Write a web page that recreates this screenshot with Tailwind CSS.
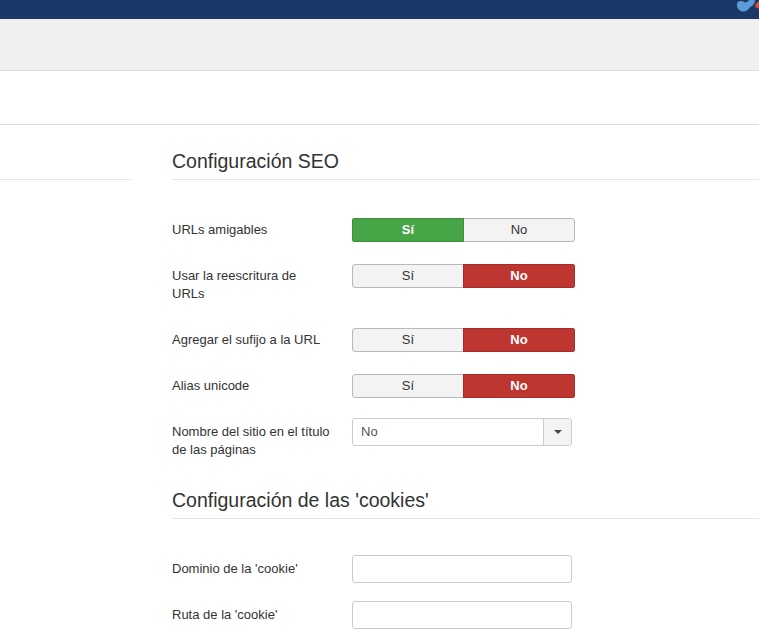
<!doctype html>
<html>
  <head>
    <meta charset="utf-8">
    <title>Configuración SEO</title>
    <script src="https://cdn.jsdelivr.net/npm/@tailwindcss/browser@4"></script>
  </head>
  <body class="h-[632px] w-[759px] overflow-hidden bg-white font-['Liberation_Sans',Arial,sans-serif] text-[13px] text-[#333]">
    <!-- top bar -->
    <header class="flex h-[19px] justify-end overflow-hidden bg-[#1a3867]">
      <svg class="h-[19px] w-[24px]" viewBox="0 0 24 19">
        <path d="M2.500 2.500 C5 0 8 1 10 2.500 C12 2.500 13 1.500 14 0 L20 0 C20 3 18 6 15 7 C14 9 12 11.500 8 11.500 C4 11.500 0.500 7 2.500 2.500 Z" fill="#5a9bd8"/>
        <path d="M20 5.500 C20.500 3.500 22.500 2 24 1.500 L24 8.500 C22 8.500 20 7.500 20 5.500 Z" fill="#e2482f"/>
      </svg>
    </header>
    <!-- toolbar -->
    <div class="h-[52px] border-b border-[#ddd] bg-[#f0f0f0]"></div>
    <!-- subhead -->
    <div class="h-[54px] border-b border-[#ddd]"></div>

    <main class="flex">
      <aside class="w-[172px] shrink-0 pr-[41px]">
        <div class="h-[55px] border-b border-[#e5e5e5]"></div>
      </aside>

      <div class="min-w-0 flex-1">
        <h2 class="mt-[24px] h-[31px] border-b border-[#e5e5e5] text-[19.5px] leading-[24px] text-[#333]">Configuración SEO</h2>

        <div class="mt-[38px] flex flex-col">
          <div class="flex h-[24px] items-center">
            <label class="w-[180px] shrink-0 leading-[18px]">URLs amigables</label>
            <div class="flex h-[24px] w-[223px] overflow-hidden rounded-[3px] text-center leading-[22px]">
              <span class="w-[112px] border border-[#3d8b3d] bg-[#46a546] font-bold text-white">Sí</span>
              <span class="flex-1 rounded-r-[3px] border border-l-0 border-[#b8b8b8] bg-[#f3f3f3]">No</span>
            </div>
          </div>

          <div class="mt-[22px] flex h-[24px] items-start">
            <label class="w-[180px] shrink-0 pr-[30px] pt-[3px] leading-[18px]">Usar la reescritura de URLs</label>
            <div class="flex h-[24px] w-[223px] overflow-hidden rounded-[3px] text-center leading-[22px]">
              <span class="w-[111px] rounded-l-[3px] border border-r-0 border-[#b8b8b8] bg-[#f3f3f3]">Sí</span>
              <span class="flex-1 border border-[#a72c2c] bg-[#bd362f] font-bold text-white">No</span>
            </div>
          </div>

          <div class="mt-[40px] flex h-[24px] items-center">
            <label class="w-[180px] shrink-0 leading-[18px]">Agregar el sufijo a la URL</label>
            <div class="flex h-[24px] w-[223px] overflow-hidden rounded-[3px] text-center leading-[22px]">
              <span class="w-[111px] rounded-l-[3px] border border-r-0 border-[#b8b8b8] bg-[#f3f3f3]">Sí</span>
              <span class="flex-1 border border-[#a72c2c] bg-[#bd362f] font-bold text-white">No</span>
            </div>
          </div>

          <div class="mt-[22px] flex h-[24px] items-center">
            <label class="w-[180px] shrink-0 leading-[18px]">Alias unicode</label>
            <div class="flex h-[24px] w-[223px] overflow-hidden rounded-[3px] text-center leading-[22px]">
              <span class="w-[111px] rounded-l-[3px] border border-r-0 border-[#b8b8b8] bg-[#f3f3f3]">Sí</span>
              <span class="flex-1 border border-[#a72c2c] bg-[#bd362f] font-bold text-white">No</span>
            </div>
          </div>

          <div class="mt-[20px] flex items-start">
            <label class="w-[180px] shrink-0 pr-[10px] pt-[5px] leading-[18px]">Nombre del sitio en el título de las páginas</label>
            <div class="flex h-[28px] w-[220px] rounded-[3px] border border-[#ccc] bg-white">
              <span class="flex-1 pl-[8px] leading-[26px] text-[#555]">No</span>
              <span class="flex w-[28px] items-center justify-center rounded-r-[3px] border-l border-[#ccc] bg-[#f3f3f3]">
                <span class="h-0 w-0 border-x-[4px] border-t-[4px] border-x-transparent border-t-[#444]"></span>
              </span>
            </div>
          </div>
        </div>

        <h2 class="mt-[29px] h-[31px] border-b border-[#e5e5e5] text-[19.5px] leading-[24px] text-[#333]">Configuración de las 'cookies'</h2>

        <div class="mt-[36px] flex flex-col gap-[18px]">
          <div class="flex h-[28px] items-center">
            <label class="w-[180px] shrink-0 leading-[18px]">Dominio de la 'cookie'</label>
            <div class="h-[28px] w-[220px] rounded-[3px] border border-[#ccc] bg-white"></div>
          </div>
          <div class="flex h-[28px] items-center">
            <label class="w-[180px] shrink-0 leading-[18px]">Ruta de la 'cookie'</label>
            <div class="h-[28px] w-[220px] rounded-[3px] border border-[#ccc] bg-white"></div>
          </div>
        </div>
      </div>
    </main>
  </body>
</html>
